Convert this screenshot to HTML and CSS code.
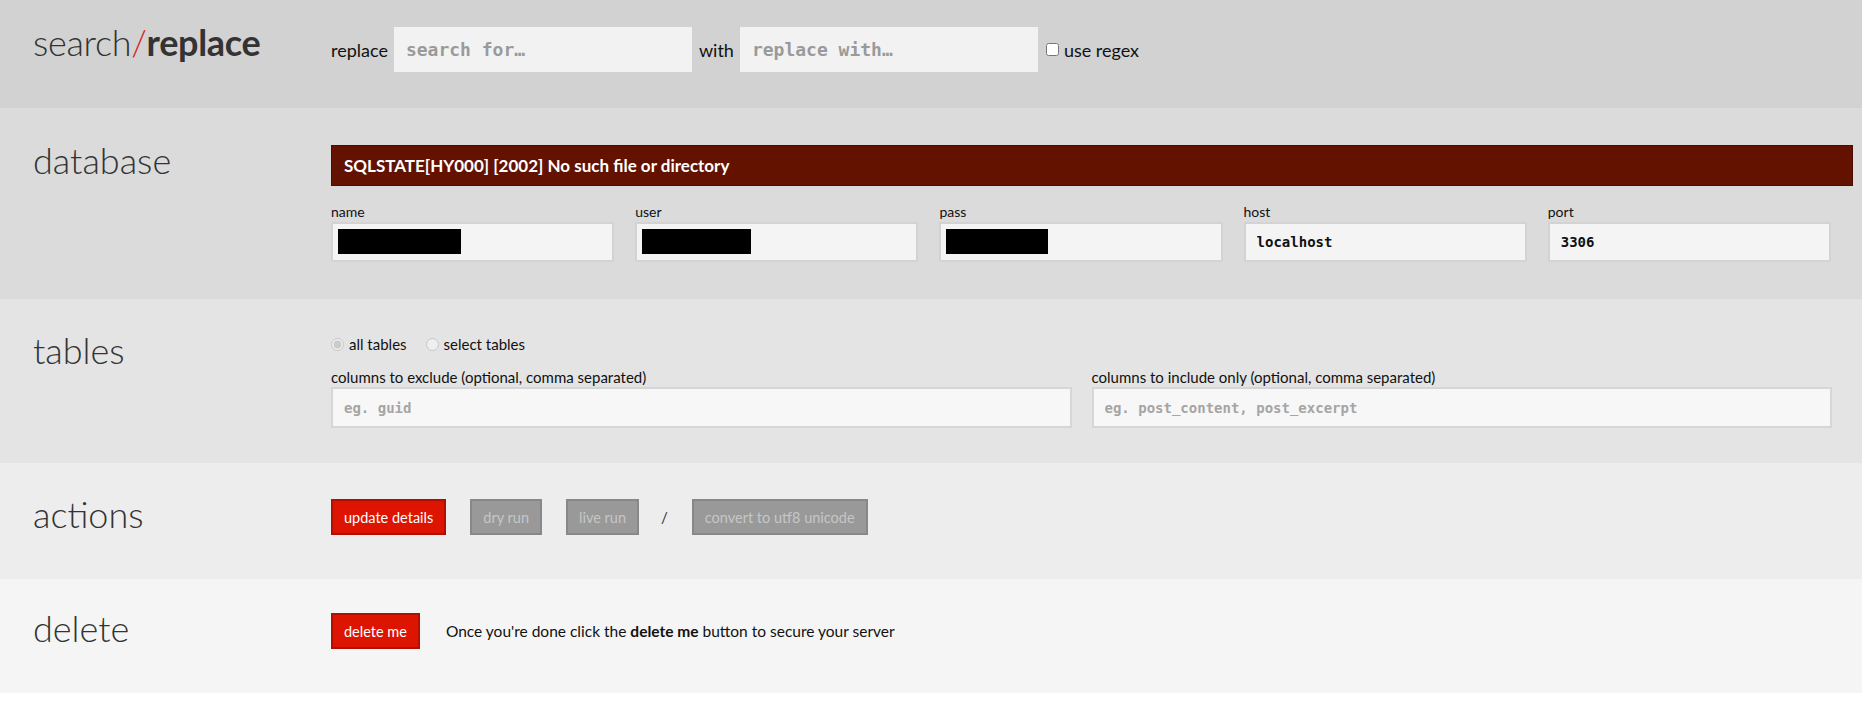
FILE: index.html
```html
<!DOCTYPE html>
<html lang="en">

<head>
  <meta charset="UTF-8" />
  <title>Search Replace DB</title>
  <link rel="stylesheet" href="styles.css">
</head>

<body>
  <header class="row row-head">
    <h1 class="logo">search<span class="slash">/</span><strong>replace</strong></h1>
    <div class="row-body search-bar">
      <label for="search">replace</label>
      <input type="text" id="search" class="search-input" placeholder="search for…">
      <label for="replace">with</label>
      <input type="text" id="replace" class="search-input" placeholder="replace with…">
      <label class="check"><input type="checkbox"> use regex</label>
    </div>
  </header>

  <section class="row row-db">
    <h2>database</h2>
    <div class="row-body">
      <div class="error">SQLSTATE[HY000] [2002] No such file or directory</div>
      <div class="fields fields-five">
        <div class="field">
          <label>name</label>
          <div class="box"><span class="redact redact-name"></span></div>
        </div>
        <div class="field">
          <label>user</label>
          <div class="box"><span class="redact redact-user"></span></div>
        </div>
        <div class="field">
          <label>pass</label>
          <div class="box"><span class="redact redact-pass"></span></div>
        </div>
        <div class="field">
          <label for="host">host</label>
          <input type="text" id="host" class="box" value="localhost">
        </div>
        <div class="field">
          <label for="port">port</label>
          <input type="text" id="port" class="box" value="3306">
        </div>
      </div>
    </div>
  </section>

  <section class="row row-tables">
    <h2>tables</h2>
    <div class="row-body">
      <div class="radios">
        <label><input type="radio" name="tables" checked disabled> all tables</label>
        <label><input type="radio" name="tables" disabled> select tables</label>
      </div>
      <div class="fields fields-two">
        <div class="field">
          <label for="exclude">columns to exclude (optional, comma separated)</label>
          <input type="text" id="exclude" class="box box-light" placeholder="eg. guid">
        </div>
        <div class="field">
          <label for="include">columns to include only (optional, comma separated)</label>
          <input type="text" id="include" class="box box-light" placeholder="eg. post_content, post_excerpt">
        </div>
      </div>
    </div>
  </section>

  <section class="row row-actions">
    <h2>actions</h2>
    <div class="row-body buttons">
      <button class="btn btn-red">update details</button>
      <button class="btn btn-off" disabled>dry run</button>
      <button class="btn btn-off" disabled>live run</button>
      <span class="sep">/</span>
      <button class="btn btn-off" disabled>convert to utf8 unicode</button>
    </div>
  </section>

  <section class="row row-delete">
    <h2>delete</h2>
    <div class="row-body buttons">
      <button class="btn btn-red">delete me</button>
      <p class="note">Once you're done click the <strong>delete me</strong> button to secure your server</p>
    </div>
  </section>
</body>

</html>
```

FILE: styles.css
```css
:root {
  --red: #dc1400;
  --red-dark: #b30f00;
  --text: #111;
  --heading: #333;
  --mono: 'DejaVu Sans Mono', monospace;
}

* {
  box-sizing: border-box;
}

body {
  margin: 0;
  font-family: Lato, 'Open Sans', sans-serif;
  font-size: 15px;
  color: var(--text);
  background: #fff;
}

/* each block: title column on the left, controls on the right */
.row {
  display: flex;
  padding: 36px 9px 36px 33px;
}

.row h1,
.row h2 {
  flex: none;
  width: 298px;
  margin: 0;
  font-size: 36px;
  font-weight: 300;
  line-height: 30px;
  color: var(--heading);
}

.row-body {
  flex: 1;
  min-width: 0;
}

.row-head {
  background: #d2d2d2;
  padding-top: 27px;
}

.row-db {
  background: #dbdbdb;
  padding-top: 37px;
  padding-bottom: 37px;
}

.row-tables {
  background: #e4e4e4;
  padding-top: 36px;
  padding-bottom: 35px;
}

.row-actions {
  background: #ededed;
  padding-bottom: 44px;
}

.row-delete {
  background: #f5f5f5;
  padding-top: 34px;
  padding-bottom: 44px;
}

/* logo */
.logo {
  letter-spacing: -0.3px;
}

.logo strong {
  font-weight: 700;
}

.logo .slash {
  color: #d2201a;
}

/* search bar */
.search-bar {
  display: flex;
  align-items: center;
  font-size: 18px;
}

.search-bar label {
  margin-right: 6px;
}

.search-input {
  width: 298px;
  height: 45px;
  margin-right: 7px;
  padding: 0 12px;
  border: none;
  background: #f2f2f2;
  font-family: var(--mono);
  font-size: 18px;
  font-weight: bold;
  outline: none;
}

.search-input::placeholder {
  color: #9a9a9a;
}

.search-bar .check {
  display: flex;
  align-items: center;
  gap: 5px;
  margin-left: 1px;
}

.check input {
  margin: 0;
  width: 13px;
  height: 13px;
}

/* database */
.error {
  height: 41px;
  padding: 0 12px;
  display: flex;
  align-items: center;
  background: #631200;
  border: 1px solid #4a0c00;
  color: #fff;
  font-size: 17px;
  font-weight: bold;
}

.fields {
  display: flex;
  padding-right: 1px;
}

.fields-five {
  margin-top: 17px;
}

.fields-five .field {
  width: 20%;
  padding-right: 21px;
}

.fields-two .field {
  width: 50%;
  padding-right: 20px;
}

.field label {
  display: block;
  font-size: 14px;
  line-height: 17px;
  margin-bottom: 2px;
}

.fields-two .field label {
  font-size: 15px;
  margin-bottom: 1px;
}

.box {
  display: block;
  width: 100%;
  height: 40px;
  padding: 5px 11px;
  background: #f4f4f4;
  border: 2px solid #d3d3d3;
  font-family: var(--mono);
  font-size: 14px;
  font-weight: bold;
  color: #111;
  outline: none;
}

div.box {
  padding: 5px;
}

.box-light {
  height: 41px;
  background: #f7f7f7;
  border-color: #d6d6d6;
}

.box::placeholder {
  color: #a5a5a5;
}

.redact {
  display: block;
  height: 25px;
  background: #000;
}

.redact-name {
  width: 123px;
}

.redact-user {
  width: 109px;
}

.redact-pass {
  width: 102px;
}

/* tables */
.radios {
  display: flex;
  gap: 19px;
  height: 18px;
  align-items: center;
  font-size: 15px;
}

.radios label {
  display: flex;
  align-items: center;
  gap: 5px;
}

.radios input {
  margin: 0;
  width: 13px;
  height: 13px;
}

.fields-two {
  margin-top: 16px;
}

/* actions */
.buttons {
  display: flex;
  align-items: center;
}

.btn {
  height: 36px;
  padding: 0 11px;
  margin-right: 24px;
  border: 2px solid;
  font-family: inherit;
  font-size: 14.5px;
  cursor: pointer;
}

.btn-red {
  background: var(--red);
  border-color: var(--red-dark);
  color: #fff;
}

.btn-off {
  background: #999;
  border-color: #888;
  color: #c6c6c6;
  cursor: default;
}

.sep {
  margin: 0 24px 0 -2px;
  color: #333;
}

.note {
  margin: 0 0 0 2px;
  font-size: 15.5px;
}
```
